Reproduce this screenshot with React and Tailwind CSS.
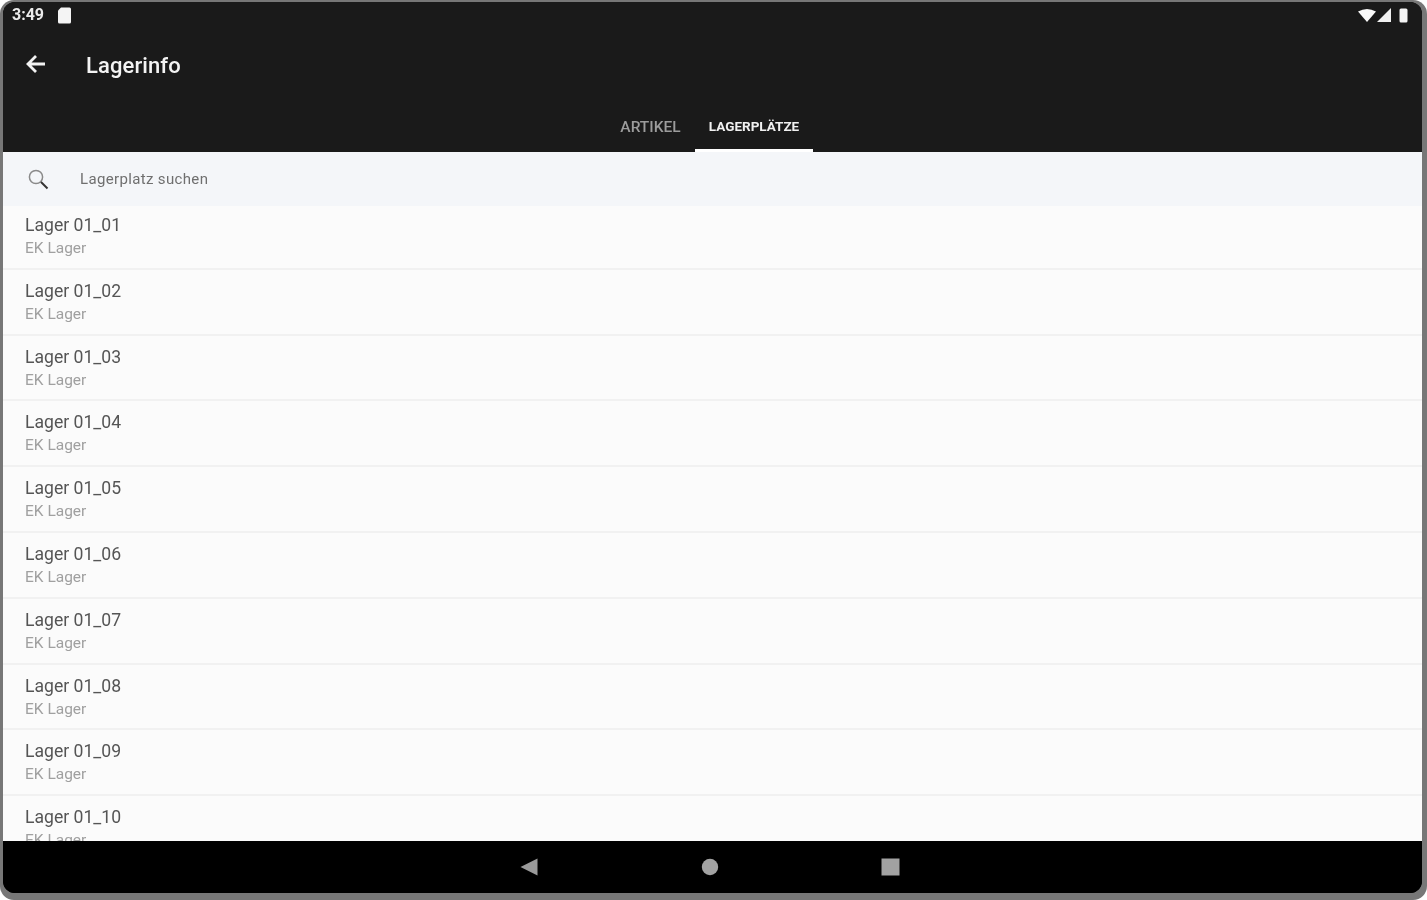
const rows = ["01", "02", "03", "04", "05", "06", "07", "08", "09", "10"];

function Row({ n, first }) {
  return (
    <div className={first ? "h-[63.8px] shrink-0 border-b-2 border-[#f1f1f1] pl-[22px] pt-[9px] bg-[#fbfbfb]" : "h-[65.8px] shrink-0 border-b-2 border-[#f1f1f1] pl-[22px] pt-[11px] bg-[#fbfbfb]"}>
      <div className="text-[17.6px] leading-[20px] text-[#555555] blur-[0.7px]">Lager 01_{n}</div>
      <div className="text-[15.5px] leading-[18px] mt-[4px] text-[#a0a0a0] blur-[0.7px]">EK Lager</div>
    </div>
  );
}

export default function App() {
  return (
    <div className="w-[1427px] h-[900px] bg-white overflow-hidden" style={{ fontFamily: "Roboto, sans-serif" }}>
      <div className="w-full h-full bg-[#777777] rounded-[14px] pt-[2px] pl-[3px] pr-[5px] pb-[7px]">
        <div className="w-full h-full rounded-[12px] overflow-hidden flex flex-col bg-black">
          <div className="h-[150px] shrink-0 bg-[#1a1a1a] flex flex-col text-white">
            <div className="h-[26px] shrink-0 flex items-center justify-between pl-[9px] pr-[14px]">
              <div className="flex items-center gap-[13px]">
                <span className="text-[16px] font-bold text-[#ececec] blur-[0.7px]">3:49</span>
                <svg width="15" height="17" viewBox="0 0 15 17" className="blur-[0.4px]">
                  <path d="M4 0.5H12.5Q14 0.5 14 2V15Q14 16.5 12.5 16.5H2.5Q1 16.5 1 15V3.5Z" fill="#f4f4f4" />
                </svg>
              </div>
              <div className="flex items-center gap-[1px]">
                <svg width="18" height="13" viewBox="0 0 18 13" className="blur-[0.3px]">
                  <path d="M0 2.5Q9 -2.5 18 2.5L9 13Z" fill="#fafafa" />
                </svg>
                <svg width="14" height="14" viewBox="0 0 14 14">
                  <path d="M14 0V14H0Z" fill="#f0f0f0" />
                </svg>
                <svg width="9" height="15" viewBox="0 0 9 15" className="ml-[7px]">
                  <rect x="0.5" y="0.5" width="8" height="14" rx="1.5" fill="#f4f4f4" />
                </svg>
              </div>
            </div>
            <div className="h-[72px] shrink-0 flex items-center pt-[2px]">
              <svg width="24" height="24" viewBox="0 0 24 24" className="ml-[21px] mt-[-3px] blur-[0.4px]" fill="none" stroke="#f2f2f2" strokeWidth="2.8">
                <path d="M21 12H4M12 4L4 12L12 20" />
              </svg>
              <span className="ml-[38px] text-[22px] font-medium text-[#f4f4f4] tracking-[0.1px] blur-[0.6px]">Lagerinfo</span>
            </div>
            <div className="flex-1 flex justify-center">
              <div className="flex ml-[-6px]">
                <div className="w-[89px] flex items-start justify-center pt-[18px]">
                  <span className="text-[15.5px] leading-[18px] font-medium whitespace-nowrap text-[#9c9c9c] blur-[0.7px]">ARTIKEL</span>
                </div>
                <div className="w-[118px] flex items-start justify-center pt-[18px] border-b-[3px] border-white">
                  <span className="text-[13.5px] leading-[17px] font-bold text-[#f0f0f0] blur-[0.6px]">LAGERPLÄTZE</span>
                </div>
              </div>
            </div>
          </div>
          <div className="flex-1 min-h-0 overflow-hidden flex flex-col bg-[#fbfbfb]">
            <div className="h-[54px] shrink-0 bg-[#f4f6f9] flex items-center pl-[24px]">
              <svg width="22" height="22" viewBox="0 0 22 22" fill="none" className="blur-[0.3px]">
                <circle cx="9" cy="9" r="6.6" stroke="#8a8a8a" strokeWidth="1.5" />
                <path d="M14 14L20.5 20.5" stroke="#333333" strokeWidth="2" />
              </svg>
              <span className="ml-[31px] text-[15px] text-[#6f6f6f] tracking-[0.35px] blur-[0.7px]">Lagerplatz suchen</span>
            </div>
            {rows.map((n, i) => (
              <Row key={n} n={n} first={i === 0} />
            ))}
          </div>
          <div className="h-[52px] shrink-0 bg-black flex items-center justify-center gap-[162px] pr-[5px]">
            <svg width="18" height="18" viewBox="0 0 18 18" className="blur-[0.4px] mr-[1px]">
              <path d="M0.5 9L17.5 0.5V17.5Z" fill="#9a9a9a" />
            </svg>
            <svg width="18" height="18" viewBox="0 0 18 18" className="blur-[0.4px]">
              <circle cx="9" cy="9" r="8.2" fill="#a2a2a2" />
            </svg>
            <svg width="19" height="18" viewBox="0 0 19 18" className="blur-[0.4px]">
              <rect x="0.5" y="0.5" width="18" height="17" fill="#a2a2a2" />
            </svg>
          </div>
        </div>
      </div>
    </div>
  );
}
